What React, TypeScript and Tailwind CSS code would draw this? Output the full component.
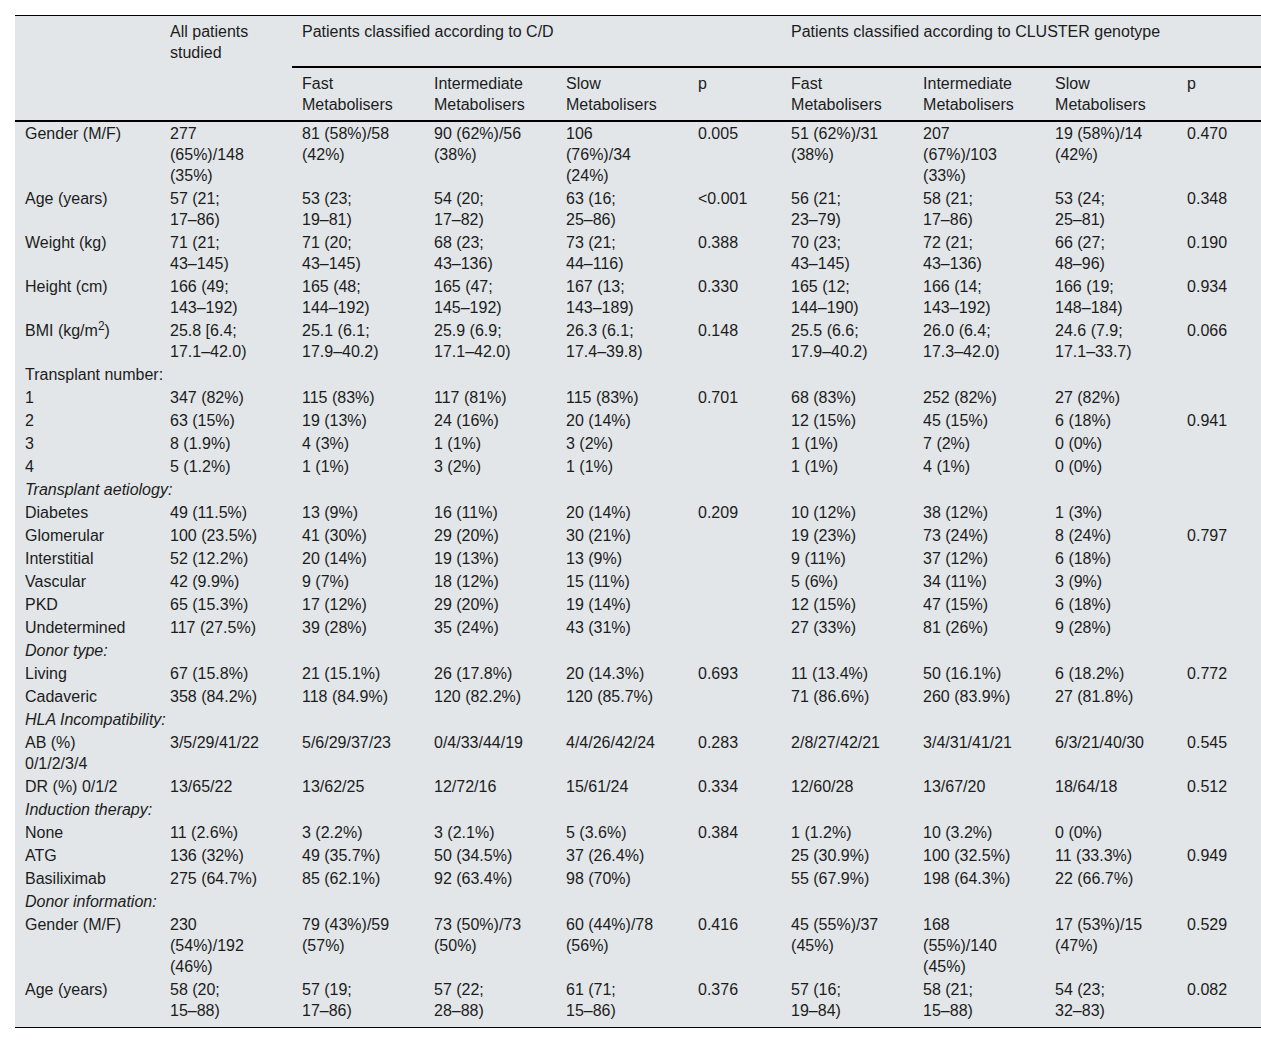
import React from 'react';

type Row =
  | { kind: 'section'; title: string; italic?: boolean }
  | { kind: 'data'; label: React.ReactNode; cells: string[]; last?: boolean };

const rows: Row[] = [
  {
    kind: 'data',
    label: 'Gender (M/F)',
    cells: ['277\n(65%)/148\n(35%)', '81 (58%)/58\n(42%)', '90 (62%)/56\n(38%)', '106\n(76%)/34\n(24%)', '0.005', '51 (62%)/31\n(38%)', '207\n(67%)/103\n(33%)', '19 (58%)/14\n(42%)', '0.470'],
  },
  {
    kind: 'data',
    label: 'Age (years)',
    cells: ['57 (21;\n17–86)', '53 (23;\n19–81)', '54 (20;\n17–82)', '63 (16;\n25–86)', '<0.001', '56 (21;\n23–79)', '58 (21;\n17–86)', '53 (24;\n25–81)', '0.348'],
  },
  {
    kind: 'data',
    label: 'Weight (kg)',
    cells: ['71 (21;\n43–145)', '71 (20;\n43–145)', '68 (23;\n43–136)', '73 (21;\n44–116)', '0.388', '70 (23;\n43–145)', '72 (21;\n43–136)', '66 (27;\n48–96)', '0.190'],
  },
  {
    kind: 'data',
    label: 'Height (cm)',
    cells: ['166 (49;\n143–192)', '165 (48;\n144–192)', '165 (47;\n145–192)', '167 (13;\n143–189)', '0.330', '165 (12;\n144–190)', '166 (14;\n143–192)', '166 (19;\n148–184)', '0.934'],
  },
  {
    kind: 'data',
    label: (
      <>
        BMI (kg/m<sup>2</sup>)
      </>
    ),
    cells: ['25.8 [6.4;\n17.1–42.0)', '25.1 (6.1;\n17.9–40.2)', '25.9 (6.9;\n17.1–42.0)', '26.3 (6.1;\n17.4–39.8)', '0.148', '25.5 (6.6;\n17.9–40.2)', '26.0 (6.4;\n17.3–42.0)', '24.6 (7.9;\n17.1–33.7)', '0.066'],
  },
  { kind: 'section', title: 'Transplant number:' },
  { kind: 'data', label: '1', cells: ['347 (82%)', '115 (83%)', '117 (81%)', '115 (83%)', '0.701', '68 (83%)', '252 (82%)', '27 (82%)', ''] },
  { kind: 'data', label: '2', cells: ['63 (15%)', '19 (13%)', '24 (16%)', '20 (14%)', '', '12 (15%)', '45 (15%)', '6 (18%)', '0.941'] },
  { kind: 'data', label: '3', cells: ['8 (1.9%)', '4 (3%)', '1 (1%)', '3 (2%)', '', '1 (1%)', '7 (2%)', '0 (0%)', ''] },
  { kind: 'data', label: '4', cells: ['5 (1.2%)', '1 (1%)', '3 (2%)', '1 (1%)', '', '1 (1%)', '4 (1%)', '0 (0%)', ''] },
  { kind: 'section', title: 'Transplant aetiology:', italic: true },
  { kind: 'data', label: 'Diabetes', cells: ['49 (11.5%)', '13 (9%)', '16 (11%)', '20 (14%)', '0.209', '10 (12%)', '38 (12%)', '1 (3%)', ''] },
  { kind: 'data', label: 'Glomerular', cells: ['100 (23.5%)', '41 (30%)', '29 (20%)', '30 (21%)', '', '19 (23%)', '73 (24%)', '8 (24%)', '0.797'] },
  { kind: 'data', label: 'Interstitial', cells: ['52 (12.2%)', '20 (14%)', '19 (13%)', '13 (9%)', '', '9 (11%)', '37 (12%)', '6 (18%)', ''] },
  { kind: 'data', label: 'Vascular', cells: ['42 (9.9%)', '9 (7%)', '18 (12%)', '15 (11%)', '', '5 (6%)', '34 (11%)', '3 (9%)', ''] },
  { kind: 'data', label: 'PKD', cells: ['65 (15.3%)', '17 (12%)', '29 (20%)', '19 (14%)', '', '12 (15%)', '47 (15%)', '6 (18%)', ''] },
  { kind: 'data', label: 'Undetermined', cells: ['117 (27.5%)', '39 (28%)', '35 (24%)', '43 (31%)', '', '27 (33%)', '81 (26%)', '9 (28%)', ''] },
  { kind: 'section', title: 'Donor type:', italic: true },
  { kind: 'data', label: 'Living', cells: ['67 (15.8%)', '21 (15.1%)', '26 (17.8%)', '20 (14.3%)', '0.693', '11 (13.4%)', '50 (16.1%)', '6 (18.2%)', '0.772'] },
  { kind: 'data', label: 'Cadaveric', cells: ['358 (84.2%)', '118 (84.9%)', '120 (82.2%)', '120 (85.7%)', '', '71 (86.6%)', '260 (83.9%)', '27 (81.8%)', ''] },
  { kind: 'section', title: 'HLA Incompatibility:', italic: true },
  { kind: 'data', label: 'AB (%)\n0/1/2/3/4', cells: ['3/5/29/41/22', '5/6/29/37/23', '0/4/33/44/19', '4/4/26/42/24', '0.283', '2/8/27/42/21', '3/4/31/41/21', '6/3/21/40/30', '0.545'] },
  { kind: 'data', label: 'DR (%) 0/1/2', cells: ['13/65/22', '13/62/25', '12/72/16', '15/61/24', '0.334', '12/60/28', '13/67/20', '18/64/18', '0.512'] },
  { kind: 'section', title: 'Induction therapy:', italic: true },
  { kind: 'data', label: 'None', cells: ['11 (2.6%)', '3 (2.2%)', '3 (2.1%)', '5 (3.6%)', '0.384', '1 (1.2%)', '10 (3.2%)', '0 (0%)', ''] },
  { kind: 'data', label: 'ATG', cells: ['136 (32%)', '49 (35.7%)', '50 (34.5%)', '37 (26.4%)', '', '25 (30.9%)', '100 (32.5%)', '11 (33.3%)', '0.949'] },
  { kind: 'data', label: 'Basiliximab', cells: ['275 (64.7%)', '85 (62.1%)', '92 (63.4%)', '98 (70%)', '', '55 (67.9%)', '198 (64.3%)', '22 (66.7%)', ''] },
  { kind: 'section', title: 'Donor information:', italic: true },
  {
    kind: 'data',
    label: 'Gender (M/F)',
    cells: ['230\n(54%)/192\n(46%)', '79 (43%)/59\n(57%)', '73 (50%)/73\n(50%)', '60 (44%)/78\n(56%)', '0.416', '45 (55%)/37\n(45%)', '168\n(55%)/140\n(45%)', '17 (53%)/15\n(47%)', '0.529'],
  },
  {
    kind: 'data',
    label: 'Age (years)',
    cells: ['58 (20;\n15–88)', '57 (19;\n17–86)', '57 (22;\n28–88)', '61 (71;\n15–86)', '0.376', '57 (16;\n19–84)', '58 (21;\n15–88)', '54 (23;\n32–83)', '0.082'],
    last: true,
  },
];

export default function App() {
  return (
    <div className="min-h-[1043px] bg-white pt-[15px] pl-[15px] font-['Liberation_Sans',Arial,sans-serif] text-[16px] leading-[21px] text-[#1c1c1c]">
      <div className="w-[1246px] border-t border-b border-black bg-[#e2e6e9]">
        <table className="w-[1246px] table-fixed border-separate border-spacing-0 text-left">
          <colgroup>
            <col className="w-[145px]" />
            <col className="w-[132px]" />
            <col className="w-[132px]" />
            <col className="w-[132px]" />
            <col className="w-[132px]" />
            <col className="w-[93px]" />
            <col className="w-[132px]" />
            <col className="w-[132px]" />
            <col className="w-[132px]" />
            <col className="w-[84px]" />
          </colgroup>
          <thead>
            <tr className="align-top">
              <th rowSpan={2} className="border-b-2 border-black px-[10px] pt-[5px] font-normal"></th>
              <th rowSpan={2} className="border-b-2 border-black px-[10px] pt-[5px] font-normal">
                All patients
                <br />
                studied
              </th>
              <th colSpan={4} className="whitespace-nowrap border-b-2 border-black px-[10px] pt-[5px] pb-[24px] font-normal">
                Patients classified according to C/D
              </th>
              <th colSpan={4} className="whitespace-nowrap border-b-2 border-black px-[10px] pt-[5px] pb-[24px] font-normal">
                Patients classified according to CLUSTER genotype
              </th>
            </tr>
            <tr className="align-top">
              {['Fast\nMetabolisers', 'Intermediate\nMetabolisers', 'Slow\nMetabolisers', 'p', 'Fast\nMetabolisers', 'Intermediate\nMetabolisers', 'Slow\nMetabolisers', 'p'].map(
                (h, i) => (
                  <th key={i} className="whitespace-pre-line border-b-2 border-black px-[10px] pt-[5px] pb-[5px] font-normal">
                    {h}
                  </th>
                )
              )}
            </tr>
          </thead>
          <tbody>
            {rows.map((r, i) =>
              r.kind === 'section' ? (
                <tr key={i}>
                  <td colSpan={10} className={`whitespace-nowrap px-[10px] py-px ${r.italic ? 'italic' : ''}`}>
                    {r.title}
                  </td>
                </tr>
              ) : (
                <tr key={i} className="align-top">
                  <td className={`whitespace-pre-line px-[10px] pt-px ${r.last ? 'pb-[6px]' : 'pb-px'}`}>{r.label}</td>
                  {r.cells.map((c, j) => (
                    <td key={j} className={`whitespace-pre px-[10px] pt-px ${r.last ? 'pb-[6px]' : 'pb-px'}`}>
                      {c}
                    </td>
                  ))}
                </tr>
              )
            )}
          </tbody>
        </table>
      </div>
    </div>
  );
}
